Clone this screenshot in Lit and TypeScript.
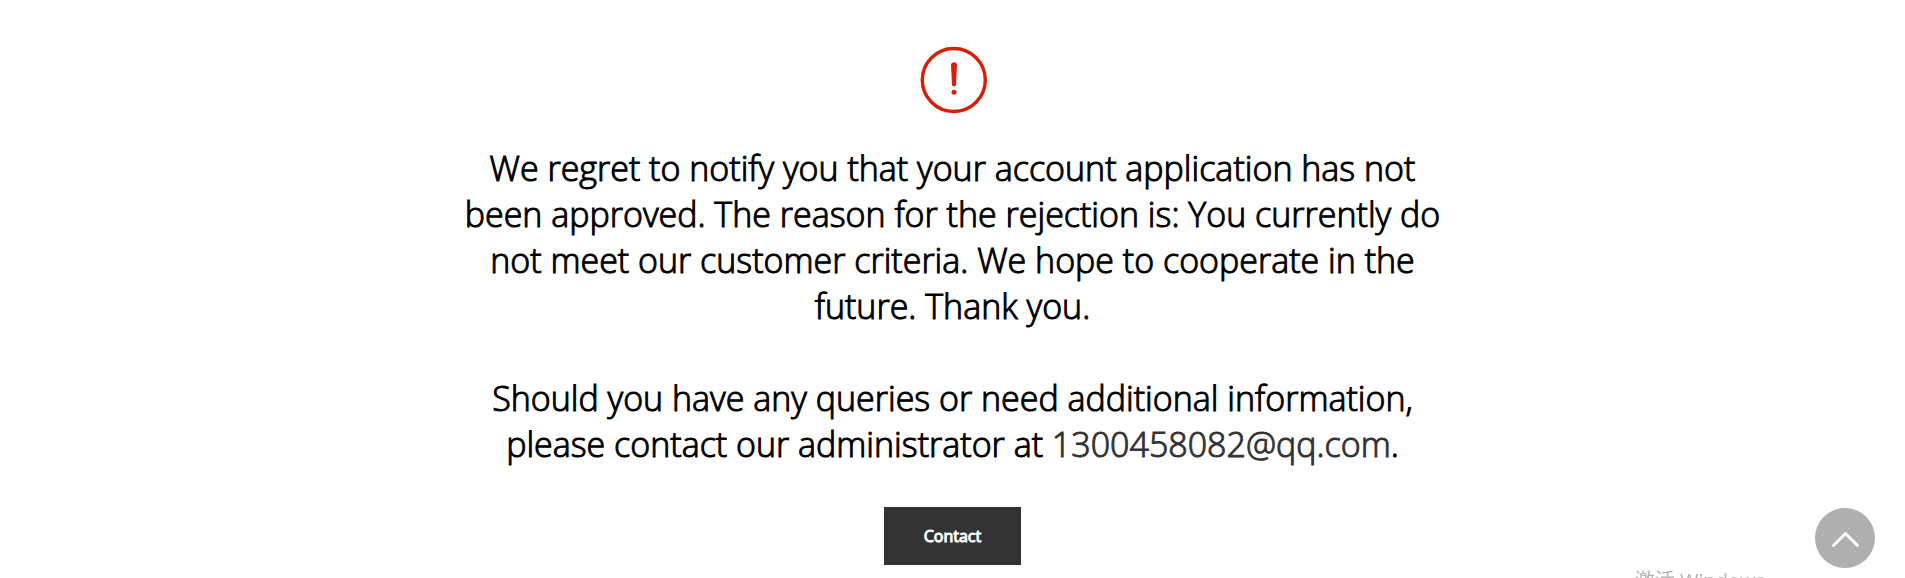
import { LitElement, html, css } from "lit";
import { customElement, property } from "lit/decorators.js";

@customElement("alert-icon")
class AlertIcon extends LitElement {
  static styles = css`
    :host { display: block; }
    svg { display: block; width: 68px; height: 68px; }
  `;

  render() {
    return html`
      <svg viewBox="0 0 68 68" role="img" aria-label="Alert">
        <circle cx="34.8" cy="34" r="31.5" fill="none" stroke="#d81e06" stroke-width="3.4" />
        <path d="M32 19 C32 15.4 38 15.4 38 19 L37 38.6 C36.8 41.2 33.2 41.2 33 38.6 Z" fill="#d81e06" />
        <circle cx="35" cy="46.2" r="2.5" fill="#d81e06" />
      </svg>
    `;
  }
}

@customElement("back-to-top")
class BackToTop extends LitElement {
  static styles = css`
    :host { display: block; position: fixed; right: 30px; bottom: 10px; z-index: 2; }
    .top {
      display: flex;
      align-items: center;
      justify-content: center;
      width: 60px;
      height: 60px;
      padding: 0;
      border: 0;
      border-radius: 50%;
      background: #afafaf;
      cursor: pointer;
    }
    svg { display: block; width: 32px; height: 20px; }
  `;

  private scrollUp() {
    window.scrollTo({ top: 0, behavior: "smooth" });
  }

  render() {
    return html`
      <button class="top" type="button" aria-label="Back to top" @click=${this.scrollUp}>
        <svg viewBox="0 0 32 20" fill="none" stroke="#fff" stroke-width="3" stroke-linecap="round" stroke-linejoin="round">
          <path d="M4.5 17.5 L16.5 5.5 L28.5 17.5" />
        </svg>
      </button>
    `;
  }
}

@customElement("app-root")
class AppRoot extends LitElement {
  @property() email = "1300458082@qq.com";

  static styles = css`
    :host {
      display: block;
      background: #fff;
      color: #000;
      font-family: "Open Sans", "Noto Sans CJK SC", sans-serif;
    }
    .notice {
      display: flex;
      flex-direction: column;
      align-items: center;
      max-width: 984px;
      margin: 0 auto;
      padding: 46px 0 14px;
      text-align: center;
    }
    .message {
      margin: 31px 0 0;
      font-size: 34px;
      font-weight: 300;
      line-height: 46px;
      -webkit-text-stroke: 1px currentColor;
    }
    .message + .message { margin-top: 46px; }
    .mail { color: #333; text-decoration: none; }
    .contact {
      margin-top: 40px;
      padding: 0 40px;
      border: 0;
      background: #333;
      color: #fff;
      font-family: inherit;
      font-size: 16px;
      font-weight: 400;
      line-height: 58px;
      -webkit-text-stroke: 1px currentColor;
      cursor: pointer;
    }
    .watermark {
      position: fixed;
      right: 140px;
      bottom: -19px;
      color: #b4b4b4;
      font-size: 20px;
      line-height: 32px;
      white-space: nowrap;
      pointer-events: none;
    }
  `;

  render() {
    return html`
      <main class="notice">
        <alert-icon></alert-icon>
        <p class="message">
          We regret to notify you that your account application has not been
          approved. The reason for the rejection is: You currently do not meet
          our customer criteria. We hope to cooperate in the future. Thank you.
        </p>
        <p class="message">
          Should you have any queries or need additional information, please
          contact our administrator at
          <a class="mail" href="mailto:${this.email}">${this.email}</a>.
        </p>
        <button class="contact" type="button">Contact</button>
      </main>
      <back-to-top></back-to-top>
      <div class="watermark">激活 Windows</div>
    `;
  }
}
